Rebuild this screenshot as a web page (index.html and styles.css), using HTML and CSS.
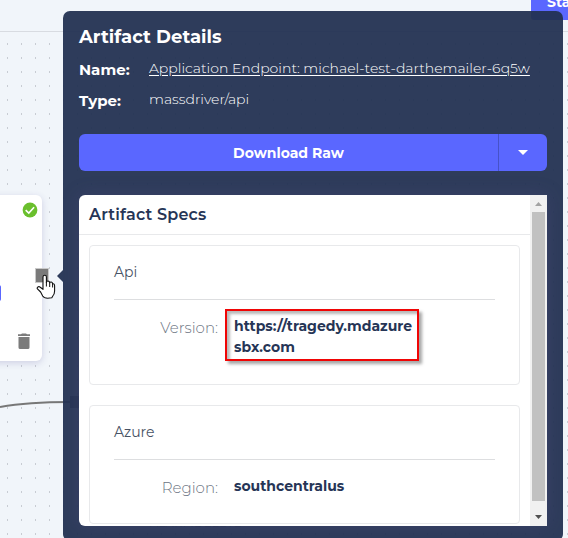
FILE: index.html
```html
<!DOCTYPE html>
<html lang="en">
<head>
<meta charset="utf-8">
<title>Artifact Details</title>
<link rel="stylesheet" href="styles.css">
</head>
<body>
<main class="canvas">
  <header class="topbar"><button class="start">Sta</button></header>
  <svg class="edge" width="90" height="30" viewBox="0 390 90 30"><path d="M0 407Q28 402 70 402" fill="none" stroke="#777" stroke-width="1.8"/><rect x="70" y="396" width="12" height="12" fill="#777"/></svg>
  <section class="node">
    <svg class="check" width="16" height="16" viewBox="0 0 16 16"><circle cx="8" cy="8" r="7.4" fill="#6abf2d"/><path d="M3.7 8.1 6.8 11.1 12.1 5.3" fill="none" stroke="#fff" stroke-width="1.6"/></svg>
    <span class="node-chip"></span>
    <svg class="trash" width="14" height="17" viewBox="0 0 14 17"><path d="M1 1.2H4L5 .4H9L10 1.2H13V3H1ZM1.5 4H12.5V14.4Q12.5 16 10.9 16H3.1Q1.5 16 1.5 14.4Z" fill="#7b7b7b"/></svg>
  </section>
  <span class="handle"></span>
  <span class="behind">ALARMDELETE</span>

  <article class="popover">
    <h1>Artifact Details</h1>
    <dl class="meta">
      <dt>Name:</dt><dd><a>Application Endpoint: michael-test-darthemailer-6q5w</a></dd>
      <dt>Type:</dt><dd>massdriver/api</dd>
    </dl>
    <div class="download">
      <button class="download-main">Download Raw</button>
      <button class="download-more" aria-label="More"><svg width="10" height="5" viewBox="0 0 10 5"><path d="M0 0H10L5 5Z" fill="#fff"/></svg></button>
    </div>
    <div class="specs">
      <div class="specs-body">
        <h2>Artifact Specs</h2>
        <div class="cards">
          <section class="card card-api">
            <h3>Api</h3>
            <div class="row"><span class="label">Version:</span><strong class="highlight">https://tragedy.mdazure<br>sbx.com</strong></div>
          </section>
          <section class="card card-azure">
            <h3>Azure</h3>
            <div class="row"><span class="label">Region:</span><strong>southcentralus</strong></div>
          </section>
        </div>
      </div>
      <div class="scrollbar">
        <svg width="17" height="17" viewBox="0 0 17 17"><path d="M5 11H12L8.5 7Z" fill="#a3a3a3"/></svg>
        <span class="thumb"></span>
        <svg width="17" height="25" viewBox="0 0 17 25"><path d="M5 14H12L8.5 18Z" fill="#505050"/></svg>
      </div>
    </div>
  </article>
  <svg class="cursor" width="20" height="26" viewBox="0 0 20 26"><path d="M7 13V3Q7 1.2 8.7 1.2T10.4 3V8.5Q10.5 7 12 7T13.7 9Q14 7.7 15.3 8T16.6 10Q18.6 9.2 18.6 12V17Q18.6 20 16.8 22L15.8 23.7Q8.5 25.2 6.7 22L4.6 18 1.2 14.7Q1 12.4 3.5 12.7L7 15.3Z" fill="#fff" stroke="#111" stroke-width="1.1" stroke-linejoin="round"/><path d="M10.4 8V12.5M13.7 9V13M16.6 10V13.5" stroke="#111"/></svg>
</main>
</body>
</html>
```

FILE: styles.css
```css
* { box-sizing: border-box; }
body { margin: 0; font-family: Montserrat, Inter, "Open Sans", sans-serif; }
h1, h2, h3, dl, dd { margin: 0; }
button { border: 0; padding: 0; font-family: inherit; color: #fff; background: #5a67ff; }
.canvas {
  position: relative; width: 568px; height: 538px; overflow: hidden;
  background: conic-gradient(from 0deg at 1px 2px, transparent 0 270deg, #c8ccd3 270deg) 7px 1px / 14px 14px, #f1f5fa;
}
.topbar { display: flex; justify-content: flex-end; height: 32px; background: #f1f5fa; border-bottom: 1px solid #d8dbe1; }
.start { width: 37px; height: 20px; padding: 0 0 15px 16px; font-size: 14px; font-weight: 700; line-height: 5px; text-align: left; border-radius: 0 0 0 3px; }
.edge { position: absolute; left: 0; top: 390px; }
.node { position: absolute; left: -80px; top: 195px; width: 122px; height: 166px; border-radius: 6px; background: #fff; box-shadow: 0 2px 7px rgba(70, 60, 140, .2); }
.check { position: absolute; right: 4px; top: 7px; }
.node-chip { position: absolute; left: 70px; top: 90px; width: 11px; height: 16px; background: #5a67ff; border-radius: 2px; }
.trash { position: absolute; right: 11px; top: 138px; }
.handle { position: absolute; left: 35px; top: 268px; width: 14px; height: 15px; background: #7a7a7a; border: 1px solid #c9c9c9; }
.behind { position: absolute; left: 150px; top: 515px; font-size: 11.5px; line-height: 16px; letter-spacing: .3px; color: #666; }
.popover { position: absolute; left: 63px; top: 11px; width: 500px; height: 530px; padding: 13px 16px; border-radius: 7px; background: rgba(35, 49, 82, .95); color: #fff; }
.popover::before { content: ""; position: absolute; left: -6px; top: 259px; border: 6.5px solid transparent; border-left: 0; border-right: 6px solid rgba(35, 49, 82, .95); }
h1 { height: 26px; font-size: 18px; line-height: 26px; font-weight: 700; letter-spacing: .04px; }
.meta { display: grid; grid-template-columns: 70px 1fr; grid-auto-rows: 31px; height: 73px; padding-top: 4px; white-space: nowrap; }
.meta dt { font-size: 15px; line-height: 31px; font-weight: 700; }
.meta dd { font-size: 14px; line-height: 29px; font-weight: 300; }
.meta a { text-decoration: underline; text-underline-offset: 2px; }
.download { display: flex; height: 37px; margin-top: 11px; border-radius: 6px; overflow: hidden; }
.download-main { flex: 1; font-size: 14px; font-weight: 700; }
.download-more { width: 49px; border-left: 1px solid #4652c8; display: grid; place-items: center; }
.specs { display: flex; height: 331px; margin-top: 24px; border-radius: 6px 0 0 6px; overflow: hidden; background: #fff; box-shadow: 0 0 18px rgba(90, 80, 140, .25); color: #263556; }
.specs-body { flex: 1; }
h2 { height: 40px; padding-left: 10px; font-size: 16px; line-height: 39px; font-weight: 600; letter-spacing: .18px; border-bottom: 1px solid #e8e9eb; }
.cards { display: flex; flex-direction: column; gap: 20px; padding: 10px; }
.card { border: 1px solid #e8e9eb; border-radius: 4px; padding: 0 24px; }
.card-api { height: 140px; }
.card-azure { height: 119px; }
h3 { height: 54px; font-size: 14px; line-height: 52px; font-weight: 400; color: #485264; border-bottom: 1px solid #dddee0; }
.row { display: grid; grid-template-columns: 104px 1fr; align-items: start; column-gap: 7px; padding-top: 9px; white-space: nowrap; }
.label { text-align: right; font-size: 15px; line-height: 38px; font-weight: 300; color: #6c7583; }
.row strong { font-size: 14px; line-height: 21px; font-weight: 700; padding: 7px 0 0 9px; }
.row .highlight { width: 194px; height: 52px; padding: 5px 0 0 7px; border: 2px solid #f00505; box-shadow: 3px 3px 3px rgba(0, 0, 0, .35), inset 3px 3px 3px rgba(0, 0, 0, .28); }
.scrollbar { display: flex; flex-direction: column; width: 17px; background: #f1f1f1; }
.thumb { height: 289px; margin: 0 2px; background: #c1c1c1; }
.scrollbar svg { flex: none; }
.cursor { position: absolute; left: 36px; top: 274px; }
```
